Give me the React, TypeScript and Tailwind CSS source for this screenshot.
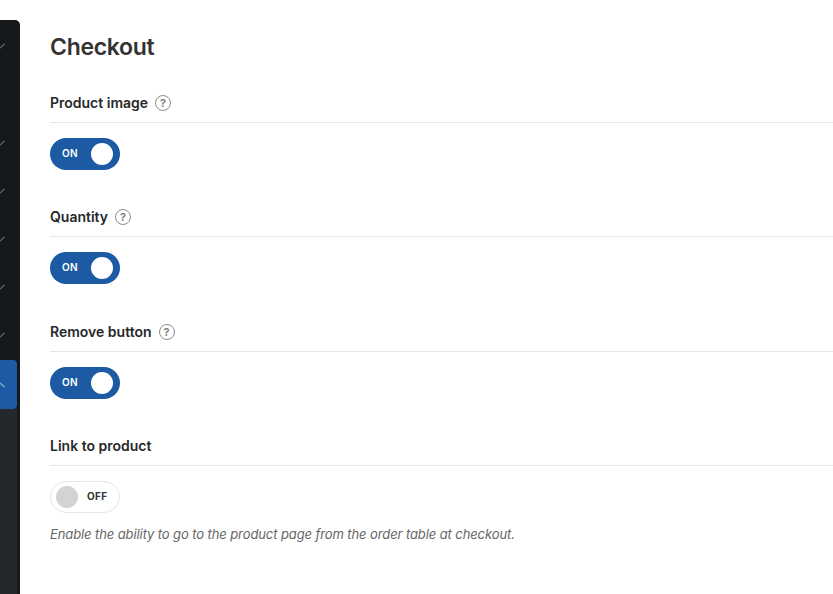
import React from 'react';

const font = "font-['Inter','Liberation_Sans',sans-serif]";

const Chevron = ({ className }: { className: string }) => (
  <div className={`relative h-[6px] ${className}`}>
    <svg width="10" height="6" viewBox="0 0 10 6" className="absolute left-[-5px] top-0" fill="none" stroke="#63686b" strokeWidth="1.3">
      <path d="M0.5 1l4.5 4 4.5-4" />
    </svg>
  </div>
);

const Help = () => (
  <span className="flex h-4 w-4 items-center justify-center rounded-full border border-[#8c8c8c] text-[11px] font-semibold leading-none text-[#777]">
    ?
  </span>
);

const Toggle = ({ on }: { on: boolean }) =>
  on ? (
    <div className="flex h-8 w-[70px] items-center justify-between rounded-full bg-[#1c5ba3] pl-3 pr-[7px]">
      <span className="-mt-px text-[10px] font-semibold tracking-[0.3px] text-white">ON</span>
      <span className="h-[22px] w-[22px] rounded-full bg-white" />
    </div>
  ) : (
    <div className="flex h-8 w-[70px] items-center gap-[9px] rounded-full border border-[#e6e6e6] bg-white pl-[5px]">
      <span className="h-[22px] w-[22px] rounded-full bg-[#d3d3d5]" />
      <span className="-mt-px text-[10px] font-bold tracking-[0.3px] text-[#333]">OFF</span>
    </div>
  );

const Field = ({ label, help, on, className }: { label: string; help?: boolean; on: boolean; className: string }) => (
  <section className={className}>
    <div className="flex h-[24px] items-center gap-[7px]">
      <span className="text-[14px] font-semibold leading-none text-[#26282a]">{label}</span>
      {help && <Help />}
    </div>
    <div className="mt-[7px] h-px bg-[#e6e6e6]" />
    <div className="mt-[15px]">
      <Toggle on={on} />
    </div>
  </section>
);

export default function App() {
  return (
    <div className={`${font} flex h-[594px] w-[833px] overflow-hidden bg-white`}>
      <aside className="mt-5 flex h-[574px] w-5 shrink-0 flex-col rounded-tr-[5px] bg-[#15191c]">
        <Chevron className="mt-[23px]" />
        <Chevron className="mt-[91px]" />
        <Chevron className="mt-[42px]" />
        <Chevron className="mt-[42px]" />
        <Chevron className="mt-[42px]" />
        <Chevron className="mt-[42px]" />
        <div className="relative mt-[22px] flex h-[49px] w-[17px] shrink-0 items-center rounded-r-[4px] bg-[#1c5ba3]">
          <svg width="10" height="6" viewBox="0 0 10 6" className="absolute left-[-5px]" fill="none" stroke="#8fb0d4" strokeWidth="1.3">
            <path d="M0.5 5l4.5-4 4.5 4" />
          </svg>
        </div>
        <div className="w-[17px] flex-1 bg-[#23282c]" />
      </aside>
      <main className="flex-1 pl-[30px]">
        <h1 className="mt-[32px] text-[23px] font-semibold leading-[30px] tracking-[-0.3px] text-[#333]">Checkout</h1>
        <Field label="Product image" help on className="mt-[29px]" />
        <Field label="Quantity" help on className="mt-[35px]" />
        <Field label="Remove button" help on className="mt-[36px]" />
        <Field label="Link to product" on={false} className="mt-[35px]" />
        <p className="mt-[13px] text-[13px] italic leading-[16px] tracking-[-0.1px] text-[#666]">
          Enable the ability to go to the product page from the order table at checkout.
        </p>
      </main>
    </div>
  );
}
